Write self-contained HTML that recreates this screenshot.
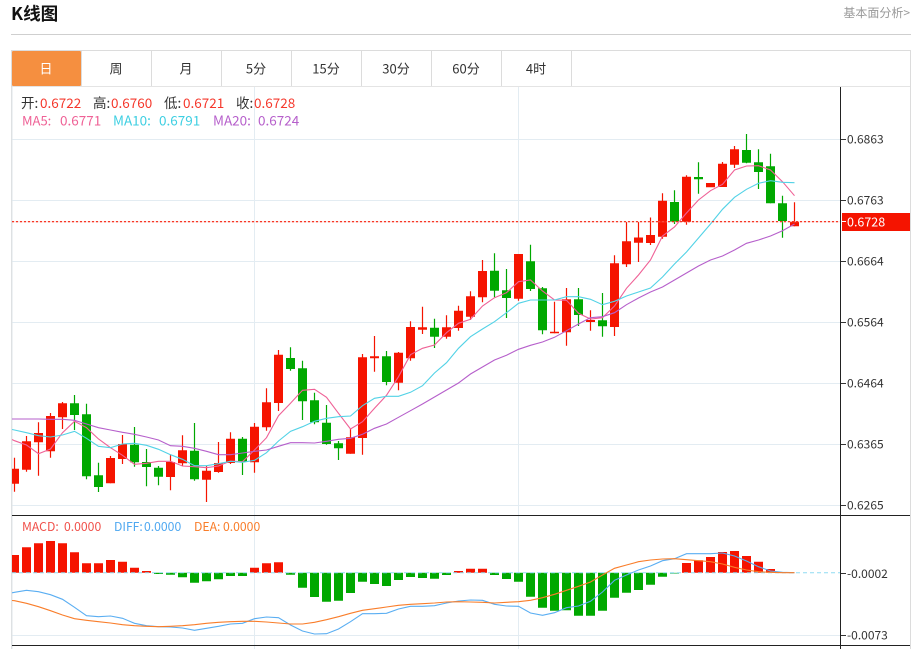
<!DOCTYPE html>
<html><head><meta charset="utf-8"><title>K线图</title>
<style>
html,body{margin:0;padding:0;background:#fff;width:919px;height:649px;overflow:hidden}
svg{display:block;position:absolute;left:0;top:0}
text{font-family:"Noto Sans CJK SC","Liberation Sans",sans-serif}
</style></head><body>
<svg width="919" height="649" viewBox="0 0 919 649" xmlns="http://www.w3.org/2000/svg">
<defs><clipPath id="c"><rect x="12" y="87" width="828" height="562"/></clipPath></defs>
<text x="11" y="20" font-size="17.6" font-weight="700" fill="#111">K线图</text>
<text x="910" y="17" font-size="12" fill="#999" text-anchor="end">基本面分析&gt;</text>
<rect x="11" y="34" width="900" height="1" fill="#cfcfcf"/>
<path d="M11.5 649V50.5H910.5V649" fill="none" stroke="#dcdcdc"/>
<path d="M12 86.5H910" stroke="#e4e4e4"/>
<rect x="12" y="51" width="69" height="35" rx="1" fill="#f58f40"/>
<path d="M81.5 51V86M151.5 51V86M221.5 51V86M291.5 51V86M361.5 51V86M431.5 51V86M501.5 51V86M571.5 51V86" stroke="#dcdcdc"/>
<g font-size="13" text-anchor="middle" fill="#333">
<text x="46" y="73.5" fill="#fff">日</text>
<text x="116" y="73.5">周</text>
<text x="186" y="73.5">月</text>
<text x="256" y="73.5">5分</text>
<text x="326" y="73.5">15分</text>
<text x="396" y="73.5">30分</text>
<text x="466" y="73.5">60分</text>
<text x="536" y="73.5">4时</text>
</g>
<!-- grid -->
<path d="M12 139.5H840M12 200.5H840M12 261.5H840M12 322.5H840M12 383.5H840M12 444.5H840M12 505.5H840M12 635.5H840M254.5 87V649M518.5 87V649" stroke="#e3ecf2" fill="none"/>
<path d="M12 87V649" stroke="#dfe6ea"/>
<g clip-path="url(#c)">
<!-- red candles -->
<path fill="#f51400" d="M10 468.7h9V483.7h-9zM22 441.3h9V469.7h-9zM34 433h9V442.3h-9zM46 416h9V451.3h-9zM58 403.3h9V417.3h-9zM106 458h9V483.3h-9zM118 444h9V459h-9zM166 462h9V477h-9zM178 450.3h9V463.3h-9zM202 470.7h9V479.7h-9zM214 463h9V472h-9zM226 438.7h9V463h-9zM250 426.7h9V462.3h-9zM262 402.3h9V427.3h-9zM274 354.7h9V403h-9zM346 437.3h9V453.7h-9zM358 357.3h9V438h-9zM370 356.3h9V358.3h-9zM394 352.7h9V382.7h-9zM406 327h9V358.3h-9zM418 327.3h9V329.7h-9zM442 327.3h9V336.7h-9zM454 310.7h9V328h-9zM466 296.3h9V316.7h-9zM478 271h9V297.3h-9zM514 254h9V298.7h-9zM550 331.7h9V333.3h-9zM562 299.3h9V332.3h-9zM586 320h9V322h-9zM610 263.3h9V327h-9zM622 241.3h9V264.3h-9zM634 237.5h9V242.7h-9zM646 235h9V243h-9zM658 200.7h9V236.7h-9zM682 176.7h9V222h-9zM706 183h9V187.3h-9zM718 163.7h9V187h-9zM730 149.3h9V164.7h-9zM790 221.7h9V226.3h-9z"/>
<path stroke="#f51400" stroke-width="1.2" fill="none" d="M14.5 457.7V491.7M26.5 436V471.7M38.5 422.3V475.7M50.5 413V457.7M62.5 402V429M110.5 456V483.3M122.5 435V464M170.5 454.3V490.3M182.5 435.3V466M206.5 466V502M218.5 442V472.7M230.5 432.3V464M254.5 423V472.7M266.5 388.3V430.7M278.5 350V411M350.5 429V453.7M362.5 354V454.7M374.5 336V371.7M398.5 352V390.3M410.5 321.3V360.7M422.5 306.7V334M446.5 315.3V338.7M458.5 305.7V330.7M470.5 291.3V320M482.5 260V302.3M518.5 254V300.7M554.5 301.7V333.3M566.5 288V345.7M590.5 310.3V330.7M614.5 255.3V336M626.5 222V267M638.5 222V262M650.5 217.5V245M662.5 193.3V238.7M686.5 175.3V224.7M722.5 162V187M734.5 146V168M794.5 202.3V226.3"/>
<!-- green candles -->
<path fill="#00a800" d="M70 403.3h9V415h-9zM82 414.3h9V476.3h-9zM94 475.3h9V487h-9zM130 444.7h9V462.3h-9zM142 462h9V467h-9zM154 467.7h9V476.7h-9zM190 450.7h9V479.3h-9zM238 438.7h9V462h-9zM286 358h9V369h-9zM298 368.3h9V401.3h-9zM310 400.3h9V422.3h-9zM322 422.7h9V444h-9zM334 443.3h9V448.3h-9zM382 356.3h9V382h-9zM430 327.7h9V336.7h-9zM490 270.7h9V290.7h-9zM502 290.3h9V298h-9zM526 261.3h9V289h-9zM538 288.3h9V330.3h-9zM574 299.3h9V315h-9zM598 320.3h9V326.3h-9zM670 202h9V221.7h-9zM694 177h9V179.3h-9zM742 150h9V162.7h-9zM754 162.3h9V172h-9zM766 166.3h9V203.3h-9zM778 203.3h9V221h-9z"/>
<path stroke="#00a800" stroke-width="1.2" fill="none" d="M74.5 395V430M86.5 403.7V479.3M98.5 462.7V492M134.5 427V466.7M146.5 449V486.3M158.5 466V485.3M194.5 423V480.7M242.5 437V475M290.5 347.3V370.7M302.5 360.7V420M314.5 392.7V424.3M326.5 405V444.7M338.5 441V460M386.5 351V385.3M434.5 318.7V348M494.5 253.3V297.3M506.5 269V318M530.5 244.7V291M542.5 287V334.3M578.5 288V326M602.5 293V336.7M674.5 190.3V224M698.5 162.3V193.7M746.5 134V163.3M758.5 149.3V189M770.5 153.7V203.3M782.5 195.7V237.7"/>
<!-- MA lines -->
<polyline fill="none" stroke="#ef6196" stroke-width="1.1" points="12,439.5 14.5,440.7 26.5,445 38.5,453.7 50.5,449 62.5,432.7 74.5,421.3 86.5,427.7 98.5,439 110.5,447.7 122.5,455.3 134.5,464.3 146.5,463.3 158.5,461.3 170.5,461.3 182.5,466 194.5,466.7 206.5,467.7 218.5,466 230.5,461 242.5,461.7 254.5,450 266.5,437.7 278.5,415.7 290.5,403.3 302.5,390.3 314.5,389.3 326.5,397.3 338.5,413.3 350.5,429 362.5,421.7 374.5,408.3 386.5,395.3 398.5,376.7 410.5,354.7 422.5,348.3 434.5,345 446.5,332.7 458.5,323.3 470.5,319.3 482.5,306 494.5,297.7 506.5,292.7 518.5,281.7 530.5,280 542.5,291 554.5,300 566.5,300.3 578.5,313.3 590.5,319 602.5,317.7 614.5,306 626.5,288.3 638.5,275 650.5,260 662.5,236 674.5,227 686.5,213 698.5,200 710.5,190.7 722.5,184.3 734.5,170 746.5,166 758.5,165.7 770.5,170 782.5,181.7 794.5,195.7"/>
<polyline fill="none" stroke="#52d2e6" stroke-width="1.1" points="12,429.5 14.5,430 26.5,432.7 38.5,435.7 50.5,437 62.5,435 74.5,431.3 86.5,438.3 98.5,446.3 110.5,447.7 122.5,444 134.5,443.3 146.5,445.3 158.5,449.3 170.5,454.7 182.5,459.3 194.5,465.7 206.5,465.7 218.5,463.7 230.5,461.3 242.5,462.3 254.5,460.3 266.5,452.7 278.5,441 290.5,431.3 302.5,426.7 314.5,421.3 326.5,418.3 338.5,416.7 350.5,416 362.5,405.7 374.5,398.3 386.5,396.3 398.5,396.3 410.5,392.3 422.5,385.7 434.5,373 446.5,362.7 458.5,348.3 470.5,336.7 482.5,329 494.5,321.7 506.5,312.7 518.5,303.3 530.5,300 542.5,300 554.5,300 566.5,296.7 578.5,296.7 590.5,299.3 602.5,304.7 614.5,301.3 626.5,296 638.5,292 650.5,288 662.5,277 674.5,264 686.5,252 698.5,238 710.5,224 722.5,209.3 734.5,197.3 746.5,189.3 758.5,183.3 770.5,180.7 782.5,182.3 794.5,182.7"/>
<polyline fill="none" stroke="#b65fcb" stroke-width="1.1" points="12,419 14.5,419 26.5,419 38.5,419 50.5,419.3 62.5,419.3 74.5,420.3 86.5,424 98.5,427.7 110.5,430 122.5,432.3 134.5,434.3 146.5,437 158.5,440 170.5,445.7 182.5,446.3 194.5,448.3 206.5,451.3 218.5,454.7 230.5,454.7 242.5,453 254.5,451.3 266.5,450 278.5,446.3 290.5,442.7 302.5,442.7 314.5,443 326.5,441.3 338.5,439.3 350.5,438.3 362.5,434.3 374.5,428.3 386.5,424 398.5,417.3 410.5,410.7 422.5,404 434.5,397 446.5,390 458.5,383 470.5,374 482.5,367 494.5,360 506.5,355.3 518.5,349.3 530.5,345.3 542.5,342 554.5,337.3 566.5,330.7 578.5,324 590.5,317.7 602.5,316.7 614.5,312.7 626.5,304.7 638.5,298 650.5,292 662.5,287 674.5,280 686.5,273 698.5,266 710.5,260 722.5,256 734.5,250 746.5,243.3 758.5,240 770.5,236 782.5,230.7 794.5,224"/>
<!-- current price -->
<rect x="12" y="221" width="828" height="1.4" fill="#ffb4ac" opacity=".35"/>
<path d="M12 221.7H840" stroke="#f5200c" stroke-width="1.2" stroke-dasharray="2 2"/>
<!-- MACD bars -->
<path fill="#f51400" d="M10 555h9V572.7h-9zM22 547.3h9V572.7h-9zM34 543.3h9V572.7h-9zM46 541h9V572.7h-9zM58 543.3h9V572.7h-9zM70 552.3h9V572.7h-9zM82 563.3h9V572.7h-9zM94 563.3h9V572.7h-9zM106 560h9V572.7h-9zM118 561.7h9V572.7h-9zM130 567.7h9V572.7h-9zM142 571h9V572.7h-9zM250 567.7h9V572.7h-9zM262 563.3h9V572.7h-9zM274 562.3h9V572.7h-9zM454 571h9V572.7h-9zM466 568.7h9V572.7h-9zM478 568.7h9V572.7h-9zM682 563h9V572.7h-9zM694 560.3h9V572.7h-9zM706 557h9V572.7h-9zM718 552h9V572.7h-9zM730 551h9V572.7h-9zM742 556h9V572.7h-9zM754 561.7h9V572.7h-9zM766 569h9V572.7h-9z"/>
<path fill="#00a800" d="M154 572.7h9V574h-9zM166 572.7h9V574.7h-9zM178 572.7h9V577.3h-9zM190 572.7h9V582.7h-9zM202 572.7h9V581.3h-9zM214 572.7h9V579.3h-9zM226 572.7h9V576h-9zM238 572.7h9V576h-9zM286 572.7h9V574.7h-9zM298 572.7h9V587.7h-9zM310 572.7h9V597h-9zM322 572.7h9V601.7h-9zM334 572.7h9V600.7h-9zM346 572.7h9V593h-9zM358 572.7h9V581.7h-9zM370 572.7h9V584h-9zM382 572.7h9V586h-9zM394 572.7h9V580h-9zM406 572.7h9V577h-9zM418 572.7h9V578h-9zM430 572.7h9V578.7h-9zM442 572.7h9V575h-9zM490 572.7h9V575h-9zM502 572.7h9V579h-9zM514 572.7h9V581.7h-9zM526 572.7h9V596.7h-9zM538 572.7h9V607.7h-9zM550 572.7h9V610.7h-9zM562 572.7h9V610.3h-9zM574 572.7h9V615.7h-9zM586 572.7h9V615.7h-9zM598 572.7h9V610.7h-9zM610 572.7h9V597.7h-9zM622 572.7h9V592.7h-9zM634 572.7h9V590h-9zM646 572.7h9V584.7h-9zM658 572.7h9V576.7h-9z"/>
<rect x="670" y="572.7" width="9" height="1.3" fill="#7fd49a"/>
<path d="M12 572.8H840" stroke="#8fdcf2" stroke-dasharray="4 3"/>
<polyline fill="none" stroke="#5aaef2" stroke-width="1.1" points="12,592.8 14.5,592.3 26.5,590.3 38.5,591.7 50.5,594.7 62.5,599.3 74.5,607.3 86.5,615.7 98.5,616.7 110.5,616 122.5,618.3 134.5,623.3 146.5,625.7 158.5,626.7 170.5,627 182.5,628 194.5,630.3 206.5,628.3 218.5,626.3 230.5,624 242.5,623.3 254.5,618.7 266.5,617 278.5,617.7 290.5,625 302.5,631 314.5,634 326.5,633.7 338.5,629 350.5,621.7 362.5,613.7 374.5,613.7 386.5,613.3 398.5,609 410.5,606.3 422.5,606.3 434.5,605.7 446.5,603 458.5,601 470.5,600 482.5,600.3 494.5,604.3 506.5,606 518.5,606.3 530.5,613 542.5,615.3 554.5,612.7 566.5,607.7 578.5,606 590.5,601.3 602.5,592 614.5,580.3 626.5,575 638.5,570 650.5,566 662.5,560.7 674.5,558.7 686.5,553.7 698.5,553.7 710.5,553.7 722.5,553 734.5,556 746.5,561 758.5,566.7 770.5,571 782.5,572.3 794.5,572.7"/>
<polyline fill="none" stroke="#f97d2a" stroke-width="1.1" points="12,600.5 14.5,600.7 26.5,603.3 38.5,606.7 50.5,610.7 62.5,615 74.5,618.7 86.5,620.3 98.5,621.7 110.5,623 122.5,624.7 134.5,625.7 146.5,626.3 158.5,626.7 170.5,626.3 182.5,625.7 194.5,624.7 206.5,623.3 218.5,622.3 230.5,621.7 242.5,621.3 254.5,621.3 266.5,622 278.5,623 290.5,624 302.5,624 314.5,622.3 326.5,619.7 338.5,616.7 350.5,613.3 362.5,610.3 374.5,608.7 386.5,607 398.5,605.3 410.5,604.3 422.5,603.7 434.5,603 446.5,602 458.5,601.7 470.5,602 482.5,602.3 494.5,603 506.5,602.3 518.5,601.7 530.5,600.3 542.5,597.7 554.5,594.3 566.5,590.3 578.5,586.3 590.5,582 602.5,575 614.5,568.3 626.5,565 638.5,561.7 650.5,560 662.5,559 674.5,558.7 686.5,559.7 698.5,560.7 710.5,561.7 722.5,564 734.5,567.3 746.5,570 758.5,571.7 770.5,572.3 782.5,572.7 794.5,572.7"/>
</g>
<!-- panel axes -->
<path d="M12 515.5H910M12 645.5H910M840.5 87V649" stroke="#222" fill="none"/>
<path d="M841 139.5h5M841 200.5h5M841 261.5h5M841 322.5h5M841 383.5h5M841 444.5h5M841 505.5h5M841 573.5h5M841 635.5h5" stroke="#333"/>
<rect x="842" y="213" width="68" height="18" fill="#f51400"/>
<path d="M842 221.5h4" stroke="#fff"/>
<g font-size="12" fill="#333">
<text x="847" y="143.5">0.6863</text>
<text x="847" y="204.5">0.6763</text>
<text x="847" y="226.5" fill="#fff" font-size="12.5">0.6728</text>
<text x="847" y="265.5">0.6664</text>
<text x="847" y="326.5">0.6564</text>
<text x="847" y="387.5">0.6464</text>
<text x="847" y="448.5">0.6365</text>
<text x="847" y="509.5">0.6265</text>
<text x="847" y="578">-0.0002</text>
<text x="847" y="639.5">-0.0073</text>
</g>
<g font-size="13.5">
<g fill="#333"><text x="21" y="108">开:</text><text x="93" y="108">高:</text><text x="164" y="108">低:</text><text x="236" y="108">收:</text></g>
<g fill="#f5382c"><text x="40" y="108">0.6722</text><text x="111" y="108">0.6760</text><text x="183" y="108">0.6721</text><text x="254" y="108">0.6728</text></g>
<g fill="#ef6196"><text x="22" y="125.5" font-size="13">MA5:</text><text x="60" y="125.5">0.6771</text></g>
<g fill="#3ecfe2"><text x="113" y="125.5">MA10:</text><text x="159" y="125.5">0.6791</text></g>
<g fill="#b65fcb"><text x="213" y="125.5">MA20:</text><text x="258" y="125.5">0.6724</text></g>
</g>
<g font-size="12.2">
<g fill="#f0504a"><text x="22" y="531">MACD:</text><text x="64" y="531">0.0000</text></g>
<g fill="#4fa8f0"><text x="114" y="531">DIFF:</text><text x="144" y="531">0.0000</text></g>
<g fill="#f97d2a"><text x="194" y="531">DEA:</text><text x="223" y="531">0.0000</text></g>
</g>
</svg>
</body></html>
